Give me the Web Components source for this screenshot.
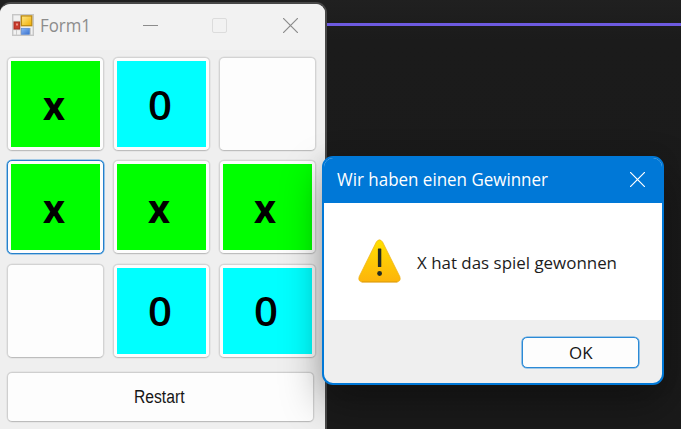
<!DOCTYPE html>
<html lang="de"><head><meta charset="utf-8"><title>Form1</title>
<style>html,body{margin:0;height:100%;overflow:hidden;background:#1a1a1a}</style></head>
<body><win-desktop></win-desktop>
<script>
const define=(name,html,setup)=>customElements.define(name,class extends HTMLElement{
 constructor(){super();this.attachShadow({mode:'open'}).innerHTML=html;}
 connectedCallback(){if(setup)setup(this,this.shadowRoot);}
});
// A single line of text fitted to an exact advance width.
define('fit-text',`<style>:host{display:block;line-height:0}svg{display:block;overflow:visible}</style><svg><text></text></svg>`,(el,r)=>{
 const s=r.querySelector('svg'),t=r.querySelector('text'),g=n=>el.getAttribute(n);
 const w=+g('width'),z=+g('size');
 s.setAttribute('width',w);s.setAttribute('height',z);
 t.textContent=g('text');
 t.setAttribute('y',z*.86);t.setAttribute('textLength',w);t.setAttribute('lengthAdjust','spacingAndGlyphs');
 t.setAttribute('font-family',g('face')||'"Open Sans","Noto Sans",sans-serif');
 t.setAttribute('font-size',z);t.setAttribute('font-weight',g('weight')||400);t.setAttribute('fill','currentColor');
});
define('app-icon',`<style>:host{display:block;width:22px;height:22px}svg{display:block}</style>
<svg width="22" height="22" viewBox="0 0 22 22"><defs>
<linearGradient id="y" x2="1" y2="1"><stop stop-color="#ffe98a"/><stop offset="1" stop-color="#f0ad00"/></linearGradient>
<linearGradient id="b" x2="1" y2="1"><stop stop-color="#8db8f5"/><stop offset="1" stop-color="#3a72d0"/></linearGradient></defs>
<rect x=".7" y=".7" width="20.6" height="20.6" fill="#f1f1f1" stroke="#c6c6c6" stroke-width="1.4"/>
<path d="M1 7.3h8M1 15.7h8M8.6 1v20M18.5 14v7M4.5 16v5" stroke="#cbcbcb" fill="none"/>
<rect x="9.4" y="1.9" width="10.4" height="9.8" fill="url(#y)" stroke="#bd8b12" stroke-width="1.3"/>
<rect x="2" y="8" width="5.6" height="7" fill="#ca3a2c" stroke="#a92c21"/><path d="M4 9.5h2v2H4z" fill="#ee9588"/>
<rect x="9.5" y="14.3" width="8" height="6" fill="url(#b)" stroke="#5886ce" stroke-width=".7"/></svg>`);
define('game-cell',`<style>:host{box-sizing:border-box;display:block;height:94px;padding:3px;border:1px solid #d3d3d3;border-bottom-color:#bdbdbd;border-radius:5px;background:#fdfdfd;box-shadow:0 0 0 .6px #dedede}
:host([focused]){border-color:#2580cb;box-shadow:0 0 0 .6px #5ba5df}
div{height:86px;box-sizing:border-box;padding:24.6px 0 0 31.6px;color:#000}
:host([mark=x]) div{background:#0f0}:host([mark="0"]) div{background:#0ff}</style><div></div>`,(el,r)=>{
 const m=el.getAttribute('mark');
 if(m)r.querySelector('div').innerHTML=`<fit-text text="${m}" width="${m==='x'?22:24}" size="39" weight="${m==='x'?700:600}"></fit-text>`;
});
define('push-button',`<style>:host{box-sizing:border-box;display:flex;align-items:center;justify-content:center;border:1px solid #cfcfcf;border-bottom-color:#bcbcbc;border-radius:5px;background:#fdfdfd;color:#161616;box-shadow:0 0 0 .5px #dedede}
:host([primary]){border:1px solid #2b8ad6;box-shadow:0 0 0 .6px #55a2df}</style><slot></slot>`);
define('game-window',`<style>:host{display:block;box-sizing:border-box;width:327px;height:440px;border:2px solid #484848;border-left:0;border-radius:11px 11px 0 0;background:#efefef;overflow:hidden;color:#8c8c8c}
header{display:grid;grid-template-columns:22px 50px 1fr 15px 56px 15px 27px;height:46px;background:#f2f2f2;padding-left:12px;align-items:start}
app-icon{margin-top:10px}.t{margin:12.7px 0 0 6px}
.min{justify-self:end;width:15px;height:1px;background:#8c8c8c;margin:21px 54px 0 0}
.max{box-sizing:border-box;width:15px;height:15px;border:1px solid #dcdcdc;border-radius:2px;margin-top:14px}
.close{grid-column:6;margin-top:14px}
main{display:grid;grid-template-columns:97px 97px 97px;grid-auto-rows:94px;gap:9.4px 8.8px;padding:7px 0 0 7px}
push-button{width:307px;height:50px;margin:14px 0 0 7px}push-button fit-text{margin:0 2px 0 0}</style>
<header><app-icon></app-icon><fit-text class="t" text="Form1" width="51" size="17.7"></fit-text><span class="min"></span><span class="max"></span>
<svg class="close" width="15" height="15"><path d="M0 0 15 15M15 0 0 15" stroke="#8c8c8c" stroke-width="1.2"/></svg></header>
<main><game-cell mark="x"></game-cell><game-cell mark="0"></game-cell><game-cell></game-cell>
<game-cell mark="x" focused></game-cell><game-cell mark="x"></game-cell><game-cell mark="x"></game-cell>
<game-cell></game-cell><game-cell mark="0"></game-cell><game-cell mark="0"></game-cell></main>
<push-button><fit-text text="Restart" width="50.5" size="18" face='"Liberation Sans",sans-serif'></fit-text></push-button>`);
define('message-box',`<style>:host{display:flex;flex-direction:column;box-sizing:border-box;width:342px;height:229px;border:2px solid #0078d7;border-radius:11px;background:#efefef;overflow:hidden;box-shadow:0 18px 40px rgba(0,0,0,.34),0 0 20px rgba(0,0,0,.08)}
header{height:45px;background:#0078d7;color:#fff;display:flex;justify-content:space-between;padding:0 17px 0 13px}
header fit-text{margin-top:13px}header svg{margin-top:14px}
main{height:117px;background:#fff;color:#1c1c1c;display:flex;gap:16px;padding-left:34px}
main svg{margin-top:36px}main fit-text{margin-top:52px}
footer{flex:1;display:flex;justify-content:flex-end;padding:16.5px 23px 0 0}push-button{width:117px;height:31px}footer fit-text{margin-top:1px}</style>
<header><fit-text text="Wir haben einen Gewinner" width="211" size="17.7"></fit-text><svg width="15" height="15"><path d="M0 0 15 15M15 0 0 15" stroke="#fff" stroke-width="1.2"/></svg></header>
<main><svg width="43" height="44" viewBox="0 0 43 44"><defs><linearGradient id="w" x2="0" y2="1"><stop stop-color="#ffe000"/><stop offset="1" stop-color="#fdb40b"/></linearGradient></defs>
<path d="M18.3 3Q21.4-1.3 24.6 3L41.8 37.5Q43.4 42.4 38.8 42.9H4.2Q-.4 42.4 1.2 37.5Z" fill="url(#w)" stroke="#edb21b" stroke-width=".7"/><path d="M3.5 43H39.5" stroke="#d99300" stroke-width=".8"/>
<rect x="19.9" y="9.5" width="3.4" height="18.5" rx=".6" fill="#222a22"/><circle cx="21.6" cy="34.5" r="2.4" fill="#222a22"/></svg>
<fit-text text="X hat das spiel gewonnen" width="200" size="16.2"></fit-text></main>
<footer><push-button primary><fit-text text="OK" width="23.5" size="17"></fit-text></push-button></footer>`);
define('win-desktop',`<style>:host{display:flow-root;position:relative;width:681px;height:429px;overflow:hidden;background:linear-gradient(#202020,#1b1b1b 40px,#1a1a1a)}
.line{height:3px;background:#6d5ae0;margin-top:23px}
game-window{position:absolute;left:0;top:2px}message-box{position:absolute;left:322px;top:156px}</style>
<div class="line"></div><game-window></game-window><message-box></message-box>`);
</script></body></html>
